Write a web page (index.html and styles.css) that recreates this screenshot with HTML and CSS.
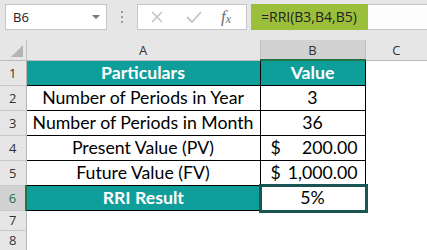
FILE: index.html
```html
<!DOCTYPE html>
<html lang="en">
<head>
  <meta charset="UTF-8">
  <meta name="viewport" content="width=device-width, initial-scale=1.0">
  <title>RRI Result</title>
  <link rel="stylesheet" href="styles.css">
</head>
<body>
  <div class="toolbar">
    <div class="namebox">
      <span>B6</span>
      <span class="caret"></span>
    </div>
    <div class="grip"><i></i><i></i><i></i></div>
    <div class="fxbox">
      <svg class="ico" width="16" height="16" viewBox="0 0 16 16">
        <path d="M3 3 L13 13 M13 3 L3 13" stroke="#c4c4c4" stroke-width="1.6" fill="none"/>
      </svg>
      <svg class="ico" width="18" height="16" viewBox="0 0 18 16">
        <path d="M2 8 L7 13 L16 3" stroke="#c4c4c4" stroke-width="1.8" fill="none"/>
      </svg>
      <span class="fx">f<span class="x">x</span></span>
    </div>
    <div class="formula">
      <span class="sel">=RRI(B3,B4,B5)</span>
    </div>
  </div>

  <table class="sheet">
    <tr class="colhead">
      <th class="corner"><span class="tri"></span></th>
      <th>A</th>
      <th class="cur">B</th>
      <th>C</th>
    </tr>
    <tr>
      <th class="rh">1</th>
      <td class="hd">Particulars</td>
      <td class="hd">Value</td>
      <td class="blank"></td>
    </tr>
    <tr>
      <th class="rh">2</th>
      <td>Number of Periods in Year</td>
      <td>3</td>
      <td class="blank"></td>
    </tr>
    <tr>
      <th class="rh">3</th>
      <td>Number of Periods in Month</td>
      <td>36</td>
      <td class="blank"></td>
    </tr>
    <tr>
      <th class="rh">4</th>
      <td>Present Value (PV)</td>
      <td class="money"><span>$</span><span>200.00</span></td>
      <td class="blank"></td>
    </tr>
    <tr>
      <th class="rh">5</th>
      <td>Future Value (FV)</td>
      <td class="money"><span>$</span><span>1,000.00</span></td>
      <td class="blank"></td>
    </tr>
    <tr>
      <th class="rh cur">6</th>
      <td class="hd">RRI Result</td>
      <td class="active">5%</td>
      <td class="blank"></td>
    </tr>
    <tr class="short">
      <th class="rh">7</th>
      <td class="empty"></td>
      <td class="empty"></td>
      <td class="blank"></td>
    </tr>
    <tr class="short">
      <th class="rh">8</th>
      <td class="empty"></td>
      <td class="empty"></td>
      <td class="blank"></td>
    </tr>
  </table>
</body>
</html>
```

FILE: styles.css
```css
*, *::before, *::after {
  box-sizing: border-box;
}

html {
  background: #fff;
}

body {
  margin: 0;
  width: 427px;
  height: 250px;
  overflow: hidden;
  font-family: Lato, "Liberation Sans", sans-serif;
  color: #000;
}

/* formula bar */
.toolbar {
  height: 40px;
  background: #e6e6e6;
  display: flex;
  align-items: flex-start;
  padding-top: 4px;
}

.namebox {
  margin-left: 5px;
  width: 102px;
  height: 26px;
  background: #fff;
  border: 1px solid #c6c6c6;
  display: flex;
  align-items: center;
  justify-content: space-between;
  padding: 0 6px 0 7px;
  font-family: "Open Sans", sans-serif;
  font-size: 13px;
  color: #222;
}

.caret {
  width: 0;
  height: 0;
  border-left: 4px solid transparent;
  border-right: 4px solid transparent;
  border-top: 4px solid #777;
}

.grip {
  width: 30px;
  height: 26px;
  display: flex;
  flex-direction: column;
  align-items: center;
  justify-content: center;
  gap: 3px;
}

.grip i {
  width: 2px;
  height: 2px;
  background: #9a9a9a;
}

.fxbox {
  width: 110px;
  height: 26px;
  background: #fff;
  border: 1px solid #c6c6c6;
  display: flex;
  align-items: center;
  padding-left: 11px;
  gap: 20px;
}

.fx {
  font-family: "Liberation Serif", serif;
  font-style: italic;
  color: #6e6e6e;
  font-size: 17px;
  margin-left: -2px;
}

.fx .x {
  font-size: 12px;
  position: relative;
  top: 1px;
}

.formula {
  margin-left: 4px;
  flex: 1;
  height: 26px;
  background: #fdfdfd;
  border-top: 1px solid #c6c6c6;
  border-bottom: 1px solid #c6c6c6;
  display: flex;
}

.formula .sel {
  width: 117px;
  margin-top: -1px;
  height: 26px;
  background: #9bbf3b;
  padding-left: 10px;
  line-height: 26px;
  font-family: "Open Sans", sans-serif;
  font-size: 14px;
  color: #222;
}

/* grid */
.sheet {
  border-collapse: collapse;
  table-layout: fixed;
  width: 427px;
}

.sheet th {
  font-family: "Open Sans", sans-serif;
  font-weight: normal;
  font-size: 13px;
  color: #333;
  background: #e6e6e6;
  padding: 0;
}

.colhead th {
  height: 20px;
  border-left: 1px solid #c0c0c0;
  border-bottom: 1px solid #bdbdbd;
}

.colhead th:nth-child(1) { width: 26px; border-left: 0; }
.colhead th:nth-child(2) { width: 234px; }
.colhead th:nth-child(3) { width: 105px; }

.colhead th.cur {
  background: #d2d2d2;
  border-bottom: 2px solid #217346;
}

.corner {
  position: relative;
}

.tri {
  position: absolute;
  right: 3px;
  bottom: 3px;
  width: 0;
  height: 0;
  border-left: 12px solid transparent;
  border-bottom: 12px solid #b4b4b4;
}

.rh {
  height: 25px;
  border-bottom: 1px solid #c8c8c8;
  border-right: 1px solid #b6b6b6;
}

.rh.cur {
  background: #d2d2d2;
  color: #217346;
  border-right: 2px solid #217346;
}

.short .rh {
  height: 20px;
}

.sheet td {
  border: 1px solid #000;
  font-size: 17.7px;
  text-align: center;
  padding: 0 4px;
  white-space: nowrap;
  line-height: 1;
}

.sheet td.hd {
  background: #0f9e9a;
  color: #fff;
  font-weight: bold;
}

.sheet td.money span:first-child {
  float: left;
  padding-left: 6px;
}

.sheet td.money span:last-child {
  float: right;
  padding-right: 3px;
}

.sheet td.active {
  position: relative;
}

.sheet td.active::after {
  content: "";
  position: absolute;
  left: -2px;
  top: -2px;
  right: -3px;
  bottom: -3px;
  border: 3px solid #1a5553;
}

.sheet td.empty,
.sheet td.blank {
  border: 0;
}
```
